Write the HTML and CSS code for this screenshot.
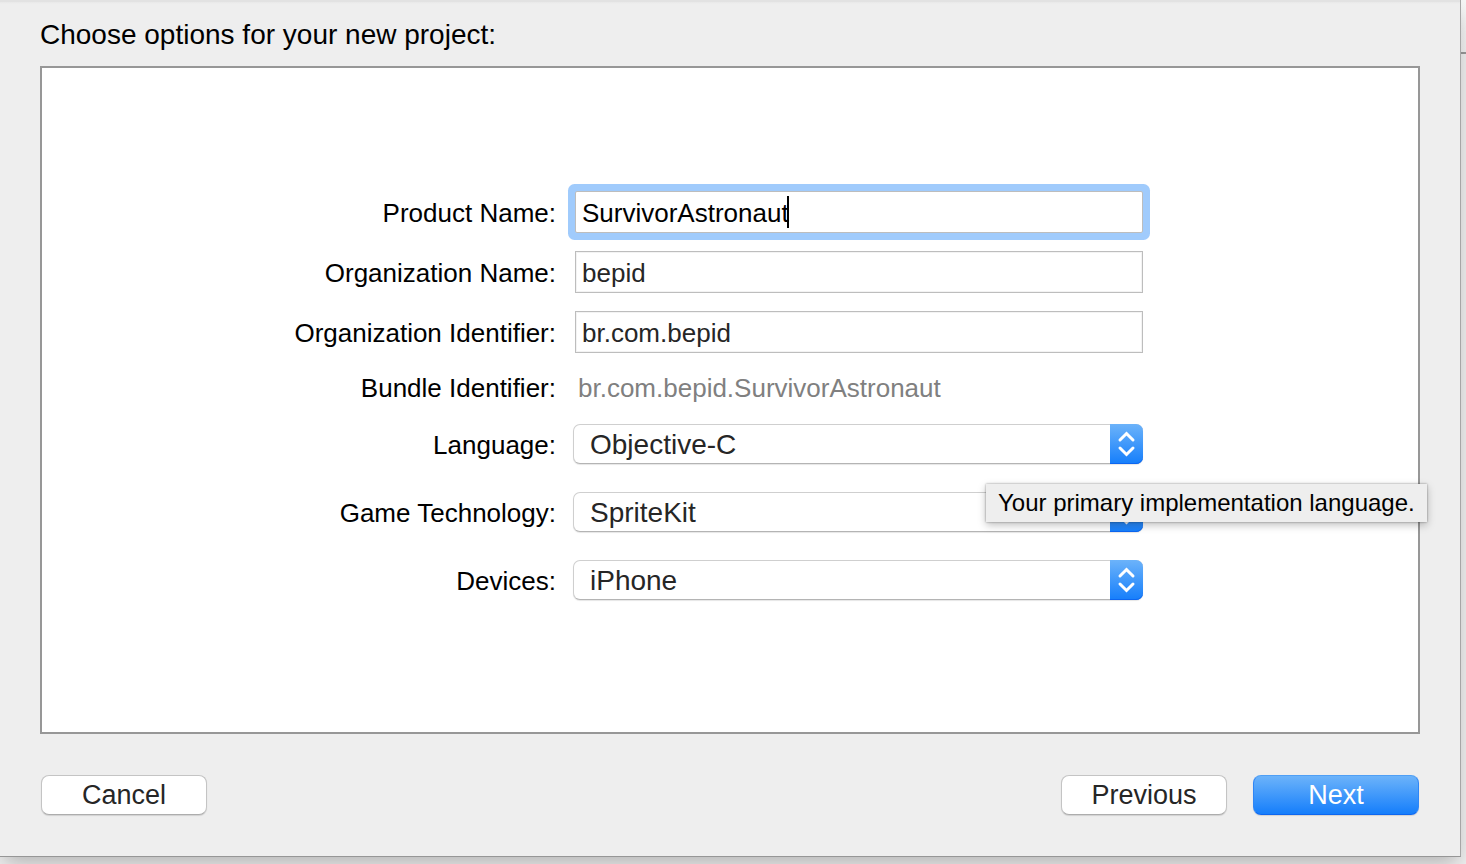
FILE: index.html
```html
<!DOCTYPE html>
<html lang="en">
<head>
<meta charset="utf-8">
<title>New Project</title>
<link rel="stylesheet" href="styles.css">
</head>
<body>
<main class="sheet">
  <h1 class="title">Choose options for your new project:</h1>
  <form class="form" id="options">
    <div class="row">
      <label class="label" for="product">Product Name:</label>
      <div class="field field-text">
        <input class="input input-focused" id="product" type="text" value="SurvivorAstronaut" spellcheck="false">
        <span class="caret"></span>
      </div>
    </div>
    <div class="row">
      <label class="label" for="org">Organization Name:</label>
      <div class="field field-text"><input class="input" id="org" type="text" value="bepid" spellcheck="false"></div>
    </div>
    <div class="row">
      <label class="label" for="orgid">Organization Identifier:</label>
      <div class="field field-text"><input class="input" id="orgid" type="text" value="br.com.bepid" spellcheck="false"></div>
    </div>
    <div class="row row-static">
      <label class="label" for="bundle">Bundle Identifier:</label>
      <output class="bundle" id="bundle">br.com.bepid.SurvivorAstronaut</output>
    </div>
    <div class="row row-select">
      <label class="label" for="language">Language:</label>
      <div class="field">
        <select class="select" id="language" aria-describedby="language-tip"><option>Objective-C</option></select>
        <svg class="cap" viewBox="0 0 33 40" aria-hidden="true"><path d="M10 16 16.5 9.5 23 16M10 24 16.5 30.5 23 24"/></svg>
        <div class="tooltip" id="language-tip" role="tooltip">Your primary implementation language.</div>
      </div>
    </div>
    <div class="row row-select">
      <label class="label" for="tech">Game Technology:</label>
      <div class="field">
        <select class="select" id="tech"><option>SpriteKit</option></select>
        <svg class="cap" viewBox="0 0 33 40" aria-hidden="true"><path d="M10 16 16.5 9.5 23 16M10 24 16.5 30.5 23 24"/></svg>
      </div>
    </div>
    <div class="row row-select">
      <label class="label" for="devices">Devices:</label>
      <div class="field">
        <select class="select" id="devices"><option>iPhone</option></select>
        <svg class="cap" viewBox="0 0 33 40" aria-hidden="true"><path d="M10 16 16.5 9.5 23 16M10 24 16.5 30.5 23 24"/></svg>
      </div>
    </div>
  </form>
  <footer class="actions">
    <button class="button" type="button">Cancel</button>
    <span class="spacer"></span>
    <button class="button" type="button">Previous</button>
    <button class="button button-primary" type="submit" form="options">Next</button>
  </footer>
</main>
</body>
</html>
```

FILE: styles.css
```css
* {
  box-sizing: border-box;
}

body {
  display: flex;
  min-height: 100vh;
  margin: 0;
  padding: 0 5px 7px 0;
  overflow: hidden;
  background: linear-gradient(#f6f6f6 0, #f0f0f0 52px, #979797 52px, #979797 54px, #eee 54px);
  color: #000;
  font-family: "Liberation Sans", Arial, sans-serif;
  font-size: 26px;
}

.sheet {
  display: flex;
  flex: 1;
  flex-direction: column;
  padding: 0 40px 41px;
  border-right: 1px solid #a6a6a6;
  border-bottom: 1px solid #969696;
  background: linear-gradient(#e2e2e2 0, #e2e2e2 2px, #e8e8e8 2px, #eee 4px);
  box-shadow: 0 10px 20px -4px rgba(0, 0, 0, 0.25);
}

.title {
  margin: 0;
  padding: 19px 0 15px;
  font-size: 28px;
  font-weight: 400;
  line-height: 32px;
}

.form {
  flex: 1;
  padding-top: 123px;
  border: 2px solid #979797;
  background: #fff;
}

.row {
  display: grid;
  grid-template-columns: minmax(0, 514fr) minmax(0, 570fr) minmax(0, 258fr);
  column-gap: 17px;
  align-items: center;
  margin-bottom: 18px;
}

.row-static {
  margin-bottom: 21px;
}

.row-select {
  margin-bottom: 28px;
}

.label {
  padding-top: 2px;
  line-height: 30px;
  text-align: right;
  white-space: nowrap;
}

.field {
  position: relative;
  display: flex;
}

.field-text {
  padding-left: 2px;
}

.input {
  width: 100%;
  height: 42px;
  padding: 2px 6px 0;
  border: 1px solid #bdbdbd;
  border-radius: 0;
  outline: none;
  background: #fff;
  box-shadow: inset 0 0 0 1px #f3f3f3;
  color: #262626;
  font: inherit;
}

.input-focused {
  box-shadow: 0 0 0 7px #a0cbfc;
  border-radius: 2px;
  color: #000;
}

.caret {
  position: absolute;
  top: 5px;
  left: 214px;
  width: 2px;
  height: 32px;
  background: #000;
}

.bundle {
  padding: 2px 0 0 5px;
  color: #808080;
  line-height: 30px;
  white-space: nowrap;
}

.select {
  width: 100%;
  height: 40px;
  padding: 0 40px 0 16px;
  border: 1px solid #cfcfcf;
  border-bottom-color: #b4b4b4;
  border-radius: 7px;
  appearance: none;
  background: #fff;
  box-shadow: 0 1px 1px rgba(0, 0, 0, 0.1);
  color: #262626;
  font: inherit;
  font-size: 28px;
}

.cap {
  position: absolute;
  top: 0;
  right: 0;
  width: 33px;
  height: 40px;
  border-radius: 0 7px 7px 0;
  background: linear-gradient(#6cb3fa, #157efb);
  box-shadow: inset 0 -1px #0d66f0;
  fill: none;
  stroke: #fff;
  stroke-width: 3;
  stroke-linecap: round;
  pointer-events: none;
}

.tooltip {
  position: absolute;
  z-index: 1;
  top: 60px;
  left: 413px;
  padding: 0 12px;
  background: #eee;
  box-shadow: 0 0 2px rgba(0, 0, 0, 0.4), 0 3px 8px rgba(0, 0, 0, 0.25);
  font-size: 24px;
  line-height: 38px;
  white-space: nowrap;
}

.actions {
  display: flex;
  gap: 26px;
  padding: 41px 1px 0;
}

.spacer {
  flex: 1;
}

.button {
  width: 166px;
  height: 40px;
  padding: 0;
  border: 1px solid #c4c4c4;
  border-bottom-color: #adadad;
  border-radius: 8px;
  background: #fff;
  box-shadow: 0 1px 1px rgba(0, 0, 0, 0.12);
  color: #262626;
  font: inherit;
  font-size: 27px;
}

.button-primary {
  border-color: #4f9ff5 #2f86f6 #0d66f0;
  background: linear-gradient(#6cb3fa, #157efb);
  color: #fff;
}
```
